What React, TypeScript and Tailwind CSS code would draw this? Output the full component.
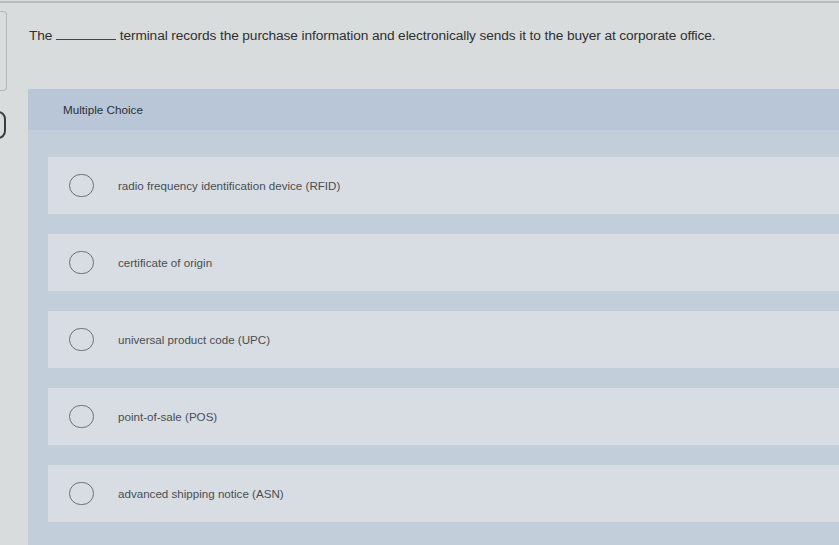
import React from "react";

const options = [
  "radio frequency identification device (RFID)",
  "certificate of origin",
  "universal product code (UPC)",
  "point-of-sale (POS)",
  "advanced shipping notice (ASN)",
];

export default function App() {
  return (
    <div
      className="w-[839px] h-[545px] overflow-hidden bg-[#d9dcdc] flex flex-col"
      style={{ fontFamily: '"Liberation Sans", Arial, sans-serif' }}
    >
      <div className="h-[2px] mt-[1px] bg-[#b9bcbe]" />
      <div className="flex h-[86px]">
        <div className="w-[7px] mt-[8px] h-[80px] border border-l-0 border-[#b4b7b9] rounded-r-[4px]" />
        <p className="ml-[22px] mt-[23px] text-[13.7px] text-[#2e3032] tracking-[-0.1px]">
          The <span className="inline-block w-[60px] border-b border-[#444] align-baseline" /> terminal records the purchase information and electronically sends it to the buyer at corporate office.
        </p>
      </div>
      <div className="flex flex-1">
        <div className="w-[8px] relative">
          <div className="absolute top-[22px] left-[-10px] w-[16px] h-[28px] border-2 border-[#3a3d40] rounded-full" />
        </div>
        <div className="ml-[20px] flex-1 bg-[#c3cedb] flex flex-col">
          <div className="h-[41px] bg-[#b9c6d7] flex items-center pl-[35px] text-[11.7px] text-[#2c3035]">
            Multiple Choice
          </div>
          <div className="ml-[20px] mt-[27px] flex flex-col gap-[20px]">
            {options.map((o, i) => (
              <div key={i} className="h-[57px] bg-[#d7dde2] flex items-center">
                <div className="ml-[21px] w-[25px] h-[23px] rounded-full border-[1.5px] border-[#6b7178]" />
                <span className="ml-[24px] text-[11.6px] text-[#4a4e52]">{o}</span>
              </div>
            ))}
          </div>
        </div>
      </div>
    </div>
  );
}
